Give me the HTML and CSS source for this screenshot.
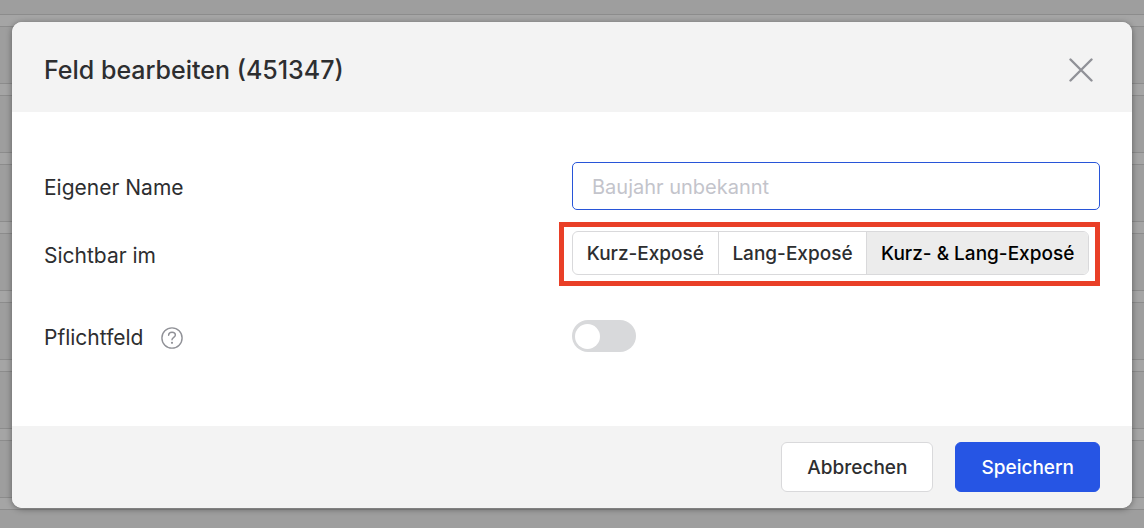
FILE: index.html
```html
<!DOCTYPE html>
<html lang="de">
<head>
<meta charset="utf-8">
<meta name="viewport" content="width=device-width, initial-scale=1">
<title>Feld bearbeiten</title>
<link rel="stylesheet" href="styles.css">
</head>
<body class="page">
<form class="dialog" role="dialog" aria-labelledby="dialog-title">
  <header class="dialog-header">
    <h1 class="dialog-title" id="dialog-title">Feld bearbeiten (451347)</h1>
    <button class="close" type="button" aria-label="Schließen">
      <svg width="24" height="24" viewBox="0 0 24 24" fill="none" stroke="currentColor" stroke-width="2.4" stroke-linecap="round" aria-hidden="true"><path d="M1.5 1.5l21 21M22.5 1.5l-21 21"/></svg>
    </button>
  </header>
  <div class="dialog-body">
    <div class="row">
      <label class="label" for="name">Eigener Name</label>
      <input class="text-input" id="name" type="text" placeholder="Baujahr unbekannt">
    </div>
    <div class="row" role="radiogroup" aria-labelledby="visible-label">
      <span class="label" id="visible-label">Sichtbar im</span>
      <div class="highlight">
        <div class="segments">
          <label class="segment"><input class="segment-input" type="radio" name="visible" value="short">Kurz-Exposé</label>
          <label class="segment"><input class="segment-input" type="radio" name="visible" value="long">Lang-Exposé</label>
          <label class="segment"><input class="segment-input" type="radio" name="visible" value="both" checked>Kurz- &amp; Lang-Exposé</label>
        </div>
      </div>
    </div>
    <div class="row row-toggle">
      <div class="label label-help">
        <label for="required">Pflichtfeld</label>
        <button class="help" type="button" aria-label="Hilfe">
          <svg width="22" height="22" viewBox="0 0 22 22" fill="none" stroke="currentColor" stroke-width="1.4" stroke-linecap="round" aria-hidden="true"><circle cx="11" cy="11" r="10.1"/><path d="M7.6 8.2C7.7 6.3 9.1 5.2 11 5.2s3.4 1.1 3.4 2.8c0 2.3-3.4 2.4-3.4 4.8"/><circle cx="11" cy="15.8" r="1.1" fill="currentColor" stroke="none"/></svg>
        </button>
      </div>
      <input class="toggle" id="required" type="checkbox" role="switch">
    </div>
  </div>
  <footer class="dialog-footer">
    <button class="button" type="button">Abbrechen</button>
    <button class="button button-primary" type="submit">Speichern</button>
  </footer>
</form>
</body>
</html>
```

FILE: styles.css
```css
* {
  box-sizing: border-box;
}

/* Dimmed list of rows behind the dialog */
.page {
  margin: 0;
  min-height: 100vh;
  padding: 22px 12px 20px;
  font-family: Inter, "Liberation Sans", sans-serif;
  color: #2d2e30;
  background: repeating-linear-gradient(#8c8c8c 0 1px, #a5a5a5 1px 12px, #8c8c8c 12px 13px, #9e9e9e 13px 69px) 0 14px / 100% 69px;
}

.dialog {
  border-radius: 10px;
  background: #fff;
  box-shadow: 0 1px 6px rgba(0, 0, 0, 0.4);
  overflow: hidden;
}

.dialog-header {
  display: flex;
  align-items: center;
  justify-content: space-between;
  padding: 32px 32px 26px;
  background: #f3f3f3;
}

.dialog-title {
  margin: 0;
  font-size: 25px;
  line-height: 32px;
  font-weight: 500;
}

.close,
.help {
  display: flex;
  padding: 0;
  border: 0;
  background: none;
  color: #909197;
}

.close {
  margin-right: 7px;
}

.dialog-body {
  display: grid;
  gap: 12px;
  padding: 50px 32px 74px;
}

.row {
  display: grid;
  grid-template-columns: 1fr 1fr;
  align-items: center;
}

.row-toggle {
  padding-top: 22px;
}

.label {
  font-size: 21px;
  line-height: 28px;
  padding-top: 4px;
}

.label-help {
  display: flex;
  align-items: center;
  gap: 18px;
}

.text-input {
  width: 100%;
  height: 48px;
  padding: 2px 19px 0;
  border: 1px solid #2855d8;
  border-radius: 5px;
  outline: 0;
  background: #fff;
  color: inherit;
  font: 20px/28px Inter, "Liberation Sans", sans-serif;
}

.text-input::placeholder {
  color: #c3c4cb;
  opacity: 1;
}

.highlight {
  margin-left: -13px;
  padding: 4px 6px 6px 8px;
  border: 5px solid #e93f27;
}

.segments {
  display: flex;
  height: 44px;
  border: 1px solid #d9d9db;
  border-radius: 6px;
  overflow: hidden;
}

.segment {
  display: flex;
  flex: 1 1 auto;
  align-items: center;
  justify-content: center;
  padding-top: 2px;
  font-size: 19px;
  line-height: 24px;
  font-weight: 500;
  white-space: nowrap;
}

.segment + .segment {
  border-left: 1px solid #d9d9db;
}

.segment:has(:checked) {
  background: #ececec;
  color: #000;
}

.segment-input {
  position: absolute;
  opacity: 0;
  pointer-events: none;
}

.toggle {
  appearance: none;
  display: flex;
  align-items: center;
  width: 64px;
  height: 32px;
  margin: 0;
  padding: 3px;
  border-radius: 16px;
  background: #d8d9db;
}

.toggle::before {
  content: "";
  width: 25px;
  height: 25px;
  border-radius: 50%;
  background: #fff;
}

.toggle:checked {
  justify-content: flex-end;
  background: #2655e4;
}

.dialog-footer {
  display: flex;
  justify-content: flex-end;
  gap: 22px;
  padding: 16px 32px;
  background: #f3f3f3;
}

.button {
  height: 50px;
  padding: 2px 25px 0;
  border: 1px solid #d9d9db;
  border-radius: 6px;
  background: #fff;
  color: inherit;
  font: 500 19px/24px Inter, "Liberation Sans", sans-serif;
}

.button-primary {
  border-color: #2655e4;
  background: #2655e4;
  color: #fff;
}
```
